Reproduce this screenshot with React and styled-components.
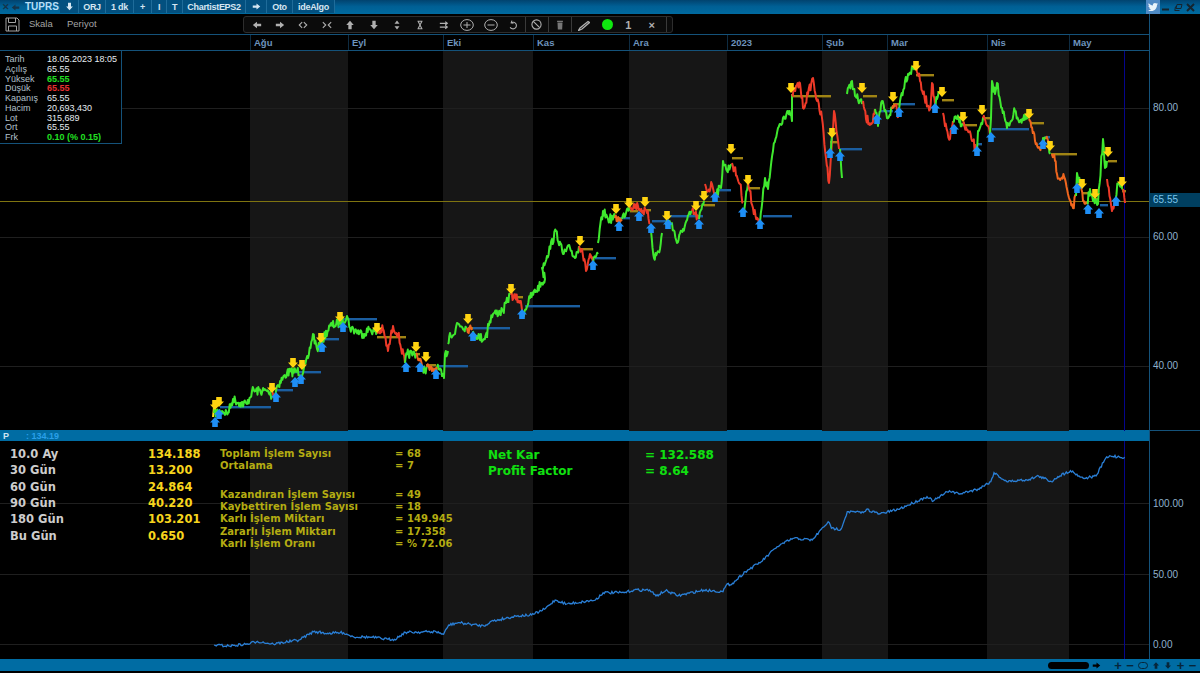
import React from 'react';
import styled, { createGlobalStyle } from 'styled-components';
import { FaTwitter } from 'react-icons/fa';

const GlobalStyle = createGlobalStyle`
  html, body {
    margin: 0;
    padding: 0;
    background: #000;
    overflow: hidden;
  }
`;

const LINE = '#14527a';
const BAR = '#006ca3';
const UI_FONT = '"Liberation Sans", Arial, sans-serif';
const WIDE_FONT = '"DejaVu Sans", Verdana, sans-serif';

const Screen = styled.div`
  width: 1200px;
  height: 673px;
  display: flex;
  flex-direction: column;
  background: #000;
  font-family: ${UI_FONT};
`;

/* title bar */
const TitleBar = styled.div`
  height: 14px;
  flex: none;
  display: flex;
  align-items: stretch;
  background: linear-gradient(#01436f, #005f94 45%, #006a9f);
  color: #d5e6f2;
  font-size: 9px;
  font-weight: bold;
  letter-spacing: -0.3px;
`;

const TitleGlyph = styled.span`
  width: ${p => p.$w}px;
  display: flex;
  align-items: center;
  justify-content: center;
  color: ${p => p.$color || '#d5e6f2'};
`;

const Symbol = styled.span`
  width: 40px;
  padding-left: 5px;
  box-sizing: border-box;
  line-height: 14px;
  font-size: 10px;
  letter-spacing: 0;
  color: #b5def7;
`;

const Tabs = styled.div`
  display: flex;
  background: #03507f;
  height: 13px;
`;

const Tab = styled.span`
  display: flex;
  align-items: center;
  justify-content: center;
  width: ${p => p.$w}px;
  border-right: 1px solid #1f6c9a;
  box-sizing: border-box;
`;

const TitleRight = styled.div`
  margin-left: auto;
  display: flex;
  align-items: stretch;
  padding-right: 3px;
`;

const TweetButton = styled.span`
  width: 14px;
  display: flex;
  align-items: center;
  justify-content: center;
  background: #4f8ac4;
  color: #eaf4fb;
  font-size: 10px;
`;

const WindowButton = styled.span`
  width: 12.5px;
  display: flex;
  align-items: center;
  justify-content: center;
  color: #14242f;
  &:first-of-type { margin-left: 2px; }
`;

/* top section */
const TopSection = styled.div`
  height: 416px;
  flex: none;
  display: flex;
`;

const TopColumn = styled.div`
  width: 1149px;
  flex: none;
  display: flex;
  flex-direction: column;
`;

const Toolbar = styled.div`
  height: 20px;
  flex: none;
  display: flex;
  align-items: center;
  border-bottom: 1px solid ${LINE};
  color: #a4a4a4;
  font-size: 9.5px;
`;

const SaveButton = styled.span`
  width: 29px;
  padding-left: 5px;
  box-sizing: border-box;
  display: flex;
  align-items: center;
`;

const ToolLabel = styled.span`
  width: 38px;
  margin-top: -1px;
`;

const ToolGroup = styled.div`
  margin-left: 138px;
  width: 430px;
  height: 17px;
  margin-top: 1px;
  display: flex;
  align-items: center;
  box-sizing: border-box;
  padding-left: 1px;
  background: #0b0b0b;
  border: 1px solid #2d2d2d;
  border-radius: 3px;
`;

const ToolButton = styled.span`
  width: ${p => p.$w || 23.4}px;
  height: 100%;
  flex: none;
  display: flex;
  align-items: center;
  justify-content: center;
  box-sizing: border-box;
  color: #b0b0b0;
  font-size: 11px;
  font-weight: bold;
  border-right: ${p => (p.$sep ? '1px solid #3a3a3a' : 'none')};
`;

const GreenDot = styled.span`
  width: 11px;
  height: 11px;
  border-radius: 50%;
  background: #0fe80f;
`;

const TimeAxis = styled.div`
  height: 15px;
  flex: none;
  display: flex;
  border-bottom: 1px solid ${LINE};
`;

const AxisSpacer = styled.div`
  width: 250px;
  flex: none;
`;

const Month = styled.div`
  width: ${p => p.$w}px;
  flex: none;
  box-sizing: border-box;
  padding-left: 3px;
  line-height: 15px;
  font-size: 9.5px;
  font-weight: bold;
  color: #6d93bd;
  border-left: 1px solid #0e2c42;
`;

const Plot = styled.div`
  position: relative;
  flex: 1;
  min-height: 0;
  svg { display: block; }
`;

const PriceColumn = styled.div`
  position: relative;
  flex: 1;
  border-left: 1px solid ${LINE};
`;

const PriceLabel = styled.span`
  position: absolute;
  left: 3px;
  top: ${p => p.$y}px;
  line-height: 12px;
  font-size: 10px;
  color: #8fb0cc;
`;

const LastPrice = styled.span`
  position: absolute;
  left: 0;
  right: 0;
  top: ${p => p.$y}px;
  height: 14px;
  padding-left: 3px;
  line-height: 14px;
  font-size: 10px;
  color: #7cc6ec;
  background: #003f60;
`;

/* quote box on the chart */
const QuoteBox = styled.div`
  position: absolute;
  left: 0;
  top: 0;
  width: 122px;
  height: 93px;
  box-sizing: border-box;
  padding: 3px 0 0 5px;
  display: grid;
  grid-template-columns: 42px 1fr;
  grid-auto-rows: 9.8px;
  align-items: center;
  background: #000;
  border-right: 1px solid ${LINE};
  border-bottom: 1px solid ${LINE};
  font-size: 9px;
`;

const QuoteKey = styled.span`
  color: #b2c0cc;
`;

const QuoteValue = styled.span`
  color: ${p => p.$color || '#e6ecf1'};
  font-weight: ${p => (p.$color ? 'bold' : 'normal')};
`;

/* strip between the panes */
const StripRow = styled.div`
  height: 11px;
  flex: none;
  display: flex;
`;

const Strip = styled.div`
  width: 1149px;
  flex: none;
  display: flex;
  align-items: center;
  background: ${BAR};
  font-size: 9px;
  font-weight: bold;
`;

const StripRest = styled.div`
  flex: 1;
  border-left: 1px solid ${LINE};
  border-top: 1px solid ${LINE};
`;

const StripName = styled.span`
  width: 26px;
  padding-left: 3px;
  box-sizing: border-box;
  color: #cfe4f2;
`;

const StripValue = styled.span`
  color: #2a9fe8;
`;

/* lower pane */
const LowerSection = styled.div`
  flex: 1;
  min-height: 0;
  display: flex;
`;

const LowerPlot = styled(Plot)`
  width: 1149px;
  flex: none;
`;

const StatsOverlay = styled.div`
  position: absolute;
  left: 0;
  top: 0;
  display: flex;
  font-family: ${WIDE_FONT};
  font-weight: bold;
`;

const PeriodTable = styled.div`
  width: 220px;
  box-sizing: border-box;
  padding: 5px 0 0 10px;
  display: grid;
  grid-template-columns: 138px 1fr;
  grid-auto-rows: 16.3px;
  align-items: center;
  font-size: 11.5px;
`;

const PeriodName = styled.span`
  color: #cdcdcd;
`;

const PeriodValue = styled.span`
  color: #f7d51d;
`;

const TradeColumn = styled.div`
  width: 268px;
  padding-top: 6px;
  font-size: 10px;
  letter-spacing: 0.05px;
  color: #b4ac12;
`;

const TradeTable = styled.div`
  margin-top: ${p => p.$gap || 0}px;
  display: grid;
  grid-template-columns: 175px 1fr;
  grid-auto-rows: 12.2px;
  align-items: center;
`;

const NetTable = styled.div`
  padding-top: 6px;
  display: grid;
  grid-template-columns: 157px 1fr;
  grid-auto-rows: 16.3px;
  align-items: center;
  font-size: 12px;
  color: #10e010;
`;

/* bottom bar */
const BottomBar = styled.div`
  height: 12px;
  flex: none;
  margin-bottom: 2px;
  padding-right: 2px;
  display: flex;
  align-items: center;
  justify-content: flex-end;
  background: ${BAR};
  color: #06263a;
  font-size: 13px;
  font-weight: bold;
`;

const ScrollPill = styled.span`
  width: 41px;
  height: 7px;
  border-radius: 4px;
  background: #000;
`;

const BarButton = styled.span`
  width: ${p => p.$w}px;
  flex: none;
  display: flex;
  align-items: center;
  justify-content: center;
`;

/* chart data, page coordinates */
const BANDS = [[250, 348], [443, 533], [629, 727], [822, 888], [987, 1069]];

const SERIES = [
  ['y', [213, 416, 214, 406]],
  ['g', [214, 412, 222, 410, 228, 412, 233, 398, 240, 402, 247, 403, 252, 390, 267, 390, 272, 395]],
  ['r', [272, 392, 275, 393]],
  ['g', [275, 394, 277, 385, 287, 372, 297, 370, 303, 372, 308, 357, 313, 333, 317, 348, 322, 340, 330, 325, 340, 322, 347, 315, 350, 327, 363, 333, 370, 328, 377, 332]],
  ['r', [377, 332, 383, 328, 388, 350, 393, 325, 398, 333, 405, 362]],
  ['g', [405, 362, 407, 353, 413, 353, 416, 352]],
  ['o', [416, 352, 422, 365]],
  ['g', [422, 365, 425, 370, 427, 366]],
  ['o', [427, 366, 432, 370, 437, 366]],
  ['g', [437, 366, 442, 375, 444, 377, 445, 353, 448, 350]],
  ['g', [448, 343, 450, 332, 455, 333, 457, 322, 467, 327]],
  ['o', [467, 327, 472, 329]],
  ['g', [473, 330, 477, 335, 484, 338, 487, 331]],
  ['g', [487, 337, 488, 323, 493, 313, 503, 310, 510, 294]],
  ['r', [511, 294, 520, 300, 523, 313]],
  ['g', [523, 313, 530, 297, 542, 282, 545, 278, 542, 267, 547, 255, 556, 230, 563, 253, 570, 247, 575, 257, 579, 245]],
  ['r', [579, 245, 582, 248, 586, 270, 590, 253, 593, 262]],
  ['g', [593, 262, 598, 253]],
  ['g', [598, 242, 603, 210, 608, 218, 615, 217]],
  ['o', [615, 217, 622, 220]],
  ['g', [622, 218, 627, 208, 630, 205]],
  ['r', [630, 205, 638, 205, 643, 210, 647, 212, 650, 222]],
  ['g', [651, 230, 654, 257, 660, 248, 662, 232]],
  ['g', [665, 223, 672, 222, 677, 242, 683, 228, 692, 210]],
  ['r', [692, 210, 699, 218]],
  ['g', [699, 218, 704, 200]],
  ['r', [705, 183, 708, 190, 712, 183, 715, 192]],
  ['g', [715, 192, 721, 187, 723, 160, 727, 170, 731, 163]],
  ['r', [732, 162, 740, 183, 743, 202]],
  ['g', [743, 215, 748, 182]],
  ['r', [748, 182, 753, 207, 758, 218, 760, 223]],
  ['g', [760, 222, 765, 177, 768, 188, 773, 150, 778, 127, 783, 117, 788, 110, 792, 120, 792, 93]],
  ['r', [792, 93, 800, 82, 803, 107, 808, 93, 813, 77, 817, 100, 822, 117, 826, 157, 829, 182, 834, 110, 839, 148]],
  ['g', [830, 155, 832, 135]],
  ['g', [840, 148, 842, 177]],
  ['g', [847, 93, 852, 80, 855, 95, 862, 103]],
  ['r', [863, 100, 866, 118, 872, 122, 875, 108]],
  ['g', [875, 108, 878, 125, 882, 100, 887, 117, 892, 108]],
  ['o', [892, 108, 896, 103]],
  ['r', [896, 103, 898, 117]],
  ['g', [898, 110, 900, 100, 905, 80, 908, 73, 915, 65]],
  ['r', [916, 65, 920, 80, 923, 93, 930, 108, 932, 82, 935, 103]],
  ['g', [935, 103, 937, 98, 941, 90]],
  ['r', [943, 112, 945, 125, 950, 138, 953, 120]],
  ['g', [953, 120, 957, 118, 963, 123]],
  ['r', [963, 123, 973, 140, 977, 153]],
  ['g', [977, 150, 978, 130, 983, 117]],
  ['r', [983, 117, 990, 133]],
  ['g', [990, 133, 991, 117, 992, 80, 995, 93, 997, 82, 1002, 107, 1007, 127, 1015, 110, 1020, 120, 1028, 117]],
  ['o', [1029, 118, 1035, 140, 1042, 148]],
  ['g', [1042, 148, 1043, 137, 1046, 138]],
  ['o', [1046, 138, 1049, 146]],
  ['g', [1048, 146, 1050, 153]],
  ['o', [1052, 153, 1055, 160, 1057, 173, 1065, 178, 1068, 193, 1073, 207, 1076, 195]],
  ['g', [1076, 195, 1077, 172, 1080, 182]],
  ['o', [1080, 182, 1083, 200, 1087, 203]],
  ['g', [1087, 203, 1090, 188, 1093, 200, 1098, 203, 1103, 138, 1105, 167, 1107, 160]],
  ['r', [1107, 178, 1112, 210, 1115, 197]],
  ['g', [1115, 197, 1118, 183, 1123, 188]],
  ['r', [1123, 188, 1125, 202]],
];

const DOWN_MARKS = [
  [215, 404], [219, 401], [272, 387], [293, 362], [302, 364], [321, 337], [340, 316], [377, 327], [416, 346], [426, 356],
  [468, 318], [511, 288], [580, 240], [616, 208], [629, 202], [645, 201], [667, 215], [696, 205], [704, 195], [731, 148],
  [748, 179], [791, 87], [832, 132], [862, 87], [893, 96], [916, 65], [942, 91], [963, 116], [982, 109], [1029, 113],
  [1050, 145], [1082, 183], [1095, 193], [1108, 151], [1122, 181],
];

const UP_MARKS = [
  [215, 421], [219, 413], [276, 396], [295, 381], [301, 378], [322, 346], [343, 326], [406, 366], [420, 366], [436, 373],
  [473, 335], [522, 313], [593, 264], [619, 225], [639, 215], [651, 227], [668, 223], [699, 223], [715, 196], [743, 211],
  [760, 223], [830, 152], [840, 155], [877, 118], [899, 111], [935, 107], [954, 128], [977, 150], [991, 136], [1043, 143],
  [1077, 187], [1088, 208], [1099, 212], [1116, 200],
];

const BLUE_LEVELS = [
  [220, 271, 406], [275, 293, 389], [295, 321, 371], [323, 339, 338], [343, 377, 318], [437, 468, 365], [473, 510, 327],
  [525, 580, 305], [595, 616, 257], [620, 630, 217], [652, 667, 220], [670, 703, 215], [717, 731, 189], [763, 792, 215],
  [840, 862, 148], [880, 893, 110], [900, 915, 103], [977, 982, 143], [992, 1029, 128], [1045, 1050, 136], [1100, 1108, 204],
];

const GOLD_LEVELS = [
  [377, 406, 336], [416, 420, 353], [426, 436, 364], [468, 473, 327], [512, 523, 296], [580, 593, 248], [616, 620, 217],
  [630, 638, 210], [646, 651, 209], [704, 715, 204], [732, 743, 157], [749, 760, 187], [792, 831, 95], [830, 839, 141],
  [863, 877, 95], [893, 899, 103], [916, 934, 74], [942, 954, 99], [963, 977, 124], [982, 991, 117], [1030, 1044, 122],
  [1051, 1077, 153], [1082, 1088, 192], [1095, 1099, 198], [1108, 1117, 160], [1122, 1126, 190],
];

const EQUITY = [
  [22, 615], [45, 618], [75, 612], [90, 604], [115, 612], [155, 600], [178, 575], [200, 580], [225, 578], [240, 590],
  [270, 592], [295, 598], [305, 598], [322, 577], [370, 575], [382, 583], [390, 555], [405, 548], [445, 558], [455, 545],
  [495, 528], [520, 525], [540, 508], [557, 480], [575, 492], [620, 480], [632, 458], [665, 458], [680, 450], [705, 450],
  [715, 468], [730, 452], [750, 467], [790, 450], [820, 455], [825, 436], [835, 430], [855, 395], [880, 365], [905, 320],
  [930, 295], [960, 300], [985, 245], [990, 265], [1005, 268], [1015, 215], [1040, 218], [1045, 208], [1065, 222], [1095, 208],
  [1140, 170], [1150, 183], [1175, 152], [1190, 162], [1220, 147], [1240, 125], [1245, 98], [1265, 125], [1300, 118], [1315, 108],
  [1335, 125], [1345, 110], [1365, 92], [1385, 115], [1405, 108], [1420, 55], [1428, 48], [1450, 52],
].map(([x, y]) => [200 + x / 1.568, 440 + y / 3]);

const SERIES_COLORS = { g: '#3fe82e', r: '#ee3a28', o: '#f0661e', y: '#ffe01a' };

// small repeatable noise so the price line stays jagged between the read-off points
let seed = 7;
const noise = () => {
  seed = (seed * 16807) % 2147483647;
  return seed / 2147483647 - 0.5;
};

const jagged = (points, amount, step) => {
  let d = `M${points[0][0]} ${points[0][1]}`;
  for (let i = 1; i < points.length; i++) {
    const [x0, y0] = points[i - 1];
    const [x1, y1] = points[i];
    const count = Math.max(1, Math.round(Math.abs(x1 - x0) / step));
    for (let k = 1; k <= count; k++) {
      const t = k / count;
      const jitter = k === count ? 0 : noise() * amount;
      d += `L${(x0 + (x1 - x0) * t).toFixed(1)} ${(y0 + (y1 - y0) * t + jitter).toFixed(1)}`;
    }
  }
  return d;
};

const pairs = flat => {
  const out = [];
  for (let i = 0; i < flat.length; i += 2) out.push([flat[i], flat[i + 1]]);
  return out;
};

const PRICE_PATHS = SERIES.map(([color, flat]) => ({
  color: SERIES_COLORS[color],
  d: jagged(pairs(flat), 9, 0.8),
}));

const EQUITY_PATH = jagged(EQUITY, 2.6, 1.1);

const PriceChart = () => (
  <svg width="1149" height="380" viewBox="0 50 1149 380">
    {BANDS.map(([a, b]) => (
      <rect key={a} x={a} y="50" width={b - a} height="380" fill="#161616" />
    ))}
    {[107, 236, 365].map(y => (
      <line key={y} x1="0" x2="1149" y1={y + 0.5} y2={y + 0.5} stroke="#1f1f1f" />
    ))}
    <line x1="0" x2="1149" y1="200.5" y2="200.5" stroke="#7f7410" />
    <line x1="1124.5" x2="1124.5" y1="50" y2="430" stroke="#05058c" />
    {BLUE_LEVELS.map(([a, b, y]) => (
      <rect key={a} x={a} y={y - 1} width={b - a} height="2.4" fill="#1b5ea0" />
    ))}
    {GOLD_LEVELS.map(([a, b, y]) => (
      <rect key={a} x={a} y={y - 1} width={b - a} height="2.4" fill="#a08414" />
    ))}
    {PRICE_PATHS.map((p, i) => (
      <path key={i} d={p.d} fill="none" stroke={p.color} strokeWidth="2" strokeLinejoin="round" />
    ))}
    {DOWN_MARKS.map(([x, y]) => (
      <path key={x} transform={`translate(${x} ${y})`} d="M-2.8 -5H2.8V-0.5H5L0 5L-5 -0.5H-2.8Z" fill="#ffd310" />
    ))}
    {UP_MARKS.map(([x, y]) => (
      <path key={x} transform={`translate(${x} ${y})`} d="M-2.8 5H2.8V0.5H5L0 -5L-5 0.5H-2.8Z" fill="#1e8ef5" />
    ))}
  </svg>
);

const EquityChart = () => (
  <svg width="1149" height="218" viewBox="0 441 1149 218">
    {BANDS.map(([a, b]) => (
      <rect key={a} x={a} y="441" width={b - a} height="218" fill="#161616" />
    ))}
    {[503, 574, 644].map(y => (
      <line key={y} x1="0" x2="1149" y1={y + 0.5} y2={y + 0.5} stroke="#1f1f1f" />
    ))}
    <line x1="1124.5" x2="1124.5" y1="441" y2="659" stroke="#05058c" />
    <path d={EQUITY_PATH} fill="none" stroke="#2a7fd6" strokeWidth="1.3" />
  </svg>
);

/* toolbar drawings */
const Glyph = ({ children, w = 10, h = 10, fill = 'none' }) => (
  <svg width={w} height={h} viewBox="0 0 12 12" fill={fill} stroke={fill === 'none' ? 'currentColor' : 'none'} strokeWidth="1.3">
    {children}
  </svg>
);

const ArrowLeft = () => <Glyph fill="currentColor"><path d="M1 6L6 2V4.5H11V7.5H6V10Z" /></Glyph>;
const ArrowRight = () => <Glyph fill="currentColor"><path d="M11 6L6 2V4.5H1V7.5H6V10Z" /></Glyph>;
const ArrowUp = () => <Glyph fill="currentColor"><path d="M6 1L10.5 6H8V11H4V6H1.5Z" /></Glyph>;
const ArrowDown = () => <Glyph fill="currentColor"><path d="M6 11L10.5 6H8V1H4V6H1.5Z" /></Glyph>;

const TOOLS = [
  { key: 'left', icon: <ArrowLeft /> },
  { key: 'right', icon: <ArrowRight /> },
  { key: 'wide', icon: <Glyph><path d="M5 2.5L1.5 6L5 9.5M7 2.5L10.5 6L7 9.5" /></Glyph> },
  { key: 'narrow', icon: <Glyph><path d="M1 2.5L4.5 6L1 9.5M11 2.5L7.5 6L11 9.5" /></Glyph> },
  { key: 'up', icon: <ArrowUp /> },
  { key: 'down', icon: <ArrowDown /> },
  { key: 'updown', icon: <Glyph fill="currentColor" h={12}><path d="M6 0.5L9 4.5H3ZM6 11.5L9 7.5H3Z" /></Glyph> },
  { key: 'cross', icon: <Glyph><path d="M3 1.5H9M3 10.5H9M4 2L8 10M8 2L4 10" /></Glyph> },
  { key: 'flows', icon: <Glyph><path d="M1 4H10M7.5 2L10 4L7.5 6M1 8.5H10M7.5 6.5L10 8.5L7.5 10.5" /></Glyph> },
  { key: 'plus', icon: <svg width="14" height="12" viewBox="0 0 14 12" fill="none" stroke="currentColor"><ellipse cx="7" cy="6" rx="6.3" ry="5.4" /><path d="M3.5 6H10.5M7 3V9" /></svg> },
  { key: 'minus', icon: <svg width="14" height="12" viewBox="0 0 14 12" fill="none" stroke="currentColor"><ellipse cx="7" cy="6" rx="6.3" ry="5.4" /><path d="M3.5 6H10.5" /></svg> },
  { key: 'undo', icon: <Glyph><path d="M4 3.2A4 4 0 1 1 2.6 8.6" /><path d="M4.8 0.8L3.8 3.4L6.6 4" /></Glyph>, sep: true },
  { key: 'ban', icon: <svg width="11" height="11" viewBox="0 0 12 12" fill="none" stroke="currentColor" strokeWidth="1.2"><circle cx="6" cy="6" r="5" /><path d="M2.5 2.5L9.5 9.5" /></svg>, sep: true },
  { key: 'trash', icon: <Glyph fill="#777" h={12}><path d="M2.5 1H9.5V2.5H2.5ZM3 3H9L8.6 11.5H3.4Z" /></Glyph>, sep: true },
  { key: 'pen', icon: <Glyph w={12} h={12}><path d="M0.5 11.5L2 9L10 2.5L11.5 3.5L4 10Z" /></Glyph> },
  { key: 'dot', icon: <GreenDot /> },
  { key: 'width', icon: '1', w: 18 },
  { key: 'close', icon: '×', w: 30, sep: true },
];

const MONTHS = [
  ['Ağu', 98], ['Eyl', 95], ['Eki', 90], ['Kas', 96], ['Ara', 98], ['2023', 95], ['Şub', 65], ['Mar', 100], ['Nis', 82], ['May', 80],
];

const QUOTE = [
  ['Tarih', '18.05.2023 18:05'],
  ['Açılış', '65.55'],
  ['Yüksek', '65.55', '#22e022'],
  ['Düşük', '65.55', '#e83030'],
  ['Kapanış', '65.55'],
  ['Hacim', '20,693,430'],
  ['Lot', '315,689'],
  ['Ort', '65.55'],
  ['Frk', '0.10 (% 0.15)', '#22e022'],
];

const PERIODS = [
  ['10.0 Ay', '134.188'],
  ['30 Gün', '13.200'],
  ['60 Gün', '24.864'],
  ['90 Gün', '40.220'],
  ['180 Gün', '103.201'],
  ['Bu Gün', '0.650'],
];

const TRADES_TOP = [
  ['Toplam İşlem Sayısı', '= 68'],
  ['Ortalama', '= 7'],
];

const TRADES_BOTTOM = [
  ['Kazandıran İşlem Sayısı', '= 49'],
  ['Kaybettiren İşlem Sayısı', '= 18'],
  ['Karlı İşlem Miktarı', '= 149.945'],
  ['Zararlı İşlem Miktarı', '= 17.358'],
  ['Karlı İşlem Oranı', '= % 72.06'],
];

const TradeRows = ({ rows }) =>
  rows.map(([name, value]) => (
    <React.Fragment key={name}>
      <span>{name}</span>
      <span>{value}</span>
    </React.Fragment>
  ));

const App = () => (
  <Screen>
    <GlobalStyle />
    <TitleBar>
      <TitleGlyph $w={11} $color="#14344a">✕</TitleGlyph>
      <TitleGlyph $w={9} $color="#14344a"><Glyph w={9} h={9} fill="currentColor"><path d="M1 6L6 2V4.5H11V7.5H6V10Z" /></Glyph></TitleGlyph>
      <Symbol>TUPRS</Symbol>
      <Tabs>
        <Tab $w={19}><Glyph w={9} h={9} fill="currentColor"><path d="M6 11L10.5 6H8V1H4V6H1.5Z" /></Glyph></Tab>
        <Tab $w={27}>ORJ</Tab>
        <Tab $w={28}>1 dk</Tab>
        <Tab $w={18}>+</Tab>
        <Tab $w={15}>I</Tab>
        <Tab $w={16}>T</Tab>
        <Tab $w={63}>ChartistEPS2</Tab>
        <Tab $w={21}><Glyph w={9} h={9} fill="currentColor"><path d="M11 6L6 2V4.5H1V7.5H6V10Z" /></Glyph></Tab>
        <Tab $w={26}>Oto</Tab>
        <Tab $w={42}>ideAlgo</Tab>
      </Tabs>
      <TitleRight>
        <TweetButton><FaTwitter /></TweetButton>
        <WindowButton>
          <svg width="8" height="8" viewBox="0 0 8 8" fill="currentColor"><rect x="0" y="5.5" width="7" height="2" /></svg>
        </WindowButton>
        <WindowButton>
          <svg width="9" height="9" viewBox="0 0 9 9" fill="none" stroke="currentColor"><path d="M3 1.5H8L7 5.5H2ZM1.5 3.5L0.8 7.5H5.5" /></svg>
        </WindowButton>
        <WindowButton>
          <svg width="9" height="9" viewBox="0 0 9 9" fill="none" stroke="currentColor" strokeWidth="2"><path d="M1 1L8 8M8 1L1 8" /></svg>
        </WindowButton>
      </TitleRight>
    </TitleBar>

    <TopSection>
      <TopColumn>
        <Toolbar>
          <SaveButton>
            <svg width="15" height="15" viewBox="0 0 15 15" fill="none" stroke="currentColor">
              <path d="M1 1H12L14 3V14H1Z" />
              <path d="M3.5 1V5.5H10.5V1M3.5 14V9H11.5V14" />
            </svg>
          </SaveButton>
          <ToolLabel>Skala</ToolLabel>
          <ToolLabel>Periyot</ToolLabel>
          <ToolGroup>
            {TOOLS.map(t => (
              <ToolButton key={t.key} $w={t.w} $sep={t.sep}>{t.icon}</ToolButton>
            ))}
          </ToolGroup>
        </Toolbar>
        <TimeAxis>
          <AxisSpacer />
          {MONTHS.map(([name, w]) => (
            <Month key={name} $w={w}>{name}</Month>
          ))}
        </TimeAxis>
        <Plot>
          <PriceChart />
          <QuoteBox>
            {QUOTE.map(([key, value, color]) => (
              <React.Fragment key={key}>
                <QuoteKey>{key}</QuoteKey>
                <QuoteValue $color={color}>{value}</QuoteValue>
              </React.Fragment>
            ))}
          </QuoteBox>
        </Plot>
      </TopColumn>
      <PriceColumn>
        <PriceLabel $y={88}>80.00</PriceLabel>
        <LastPrice $y={179}>65.55</LastPrice>
        <PriceLabel $y={217}>60.00</PriceLabel>
        <PriceLabel $y={346}>40.00</PriceLabel>
      </PriceColumn>
    </TopSection>

    <StripRow>
      <Strip>
        <StripName>P</StripName>
        <StripValue>: 134.19</StripValue>
      </Strip>
      <StripRest />
    </StripRow>

    <LowerSection>
      <LowerPlot>
        <EquityChart />
        <StatsOverlay>
          <PeriodTable>
            {PERIODS.map(([name, value]) => (
              <React.Fragment key={name}>
                <PeriodName>{name}</PeriodName>
                <PeriodValue>{value}</PeriodValue>
              </React.Fragment>
            ))}
          </PeriodTable>
          <TradeColumn>
            <TradeTable>
              <TradeRows rows={TRADES_TOP} />
            </TradeTable>
            <TradeTable $gap={17}>
              <TradeRows rows={TRADES_BOTTOM} />
            </TradeTable>
          </TradeColumn>
          <NetTable>
            <span>Net Kar</span>
            <span>= 132.588</span>
            <span>Profit Factor</span>
            <span>= 8.64</span>
          </NetTable>
        </StatsOverlay>
      </LowerPlot>
      <PriceColumn>
        <PriceLabel $y={57}>100.00</PriceLabel>
        <PriceLabel $y={128}>50.00</PriceLabel>
        <PriceLabel $y={198}>0.00</PriceLabel>
      </PriceColumn>
    </LowerSection>

    <BottomBar>
      <ScrollPill />
      <BarButton $w={14}><Glyph w={9} h={9} fill="#000"><path d="M11 6L6 2V4.5H1V7.5H6V10Z" /></Glyph></BarButton>
      <BarButton $w={9} />
      <BarButton $w={12}>+</BarButton>
      <BarButton $w={12}>−</BarButton>
      <BarButton $w={14}>
        <svg width="10" height="7" viewBox="0 0 10 7" fill="none" stroke="currentColor"><rect x="0.5" y="0.5" width="9" height="6" rx="3" /></svg>
      </BarButton>
      <BarButton $w={12}><Glyph w={8} h={9} fill="currentColor"><path d="M6 1L10.5 6H8V11H4V6H1.5Z" /></Glyph></BarButton>
      <BarButton $w={12}><Glyph w={8} h={9} fill="currentColor"><path d="M6 11L10.5 6H8V1H4V6H1.5Z" /></Glyph></BarButton>
      <BarButton $w={13}>+</BarButton>
      <BarButton $w={11}>−</BarButton>
    </BottomBar>
  </Screen>
);

export default App;
